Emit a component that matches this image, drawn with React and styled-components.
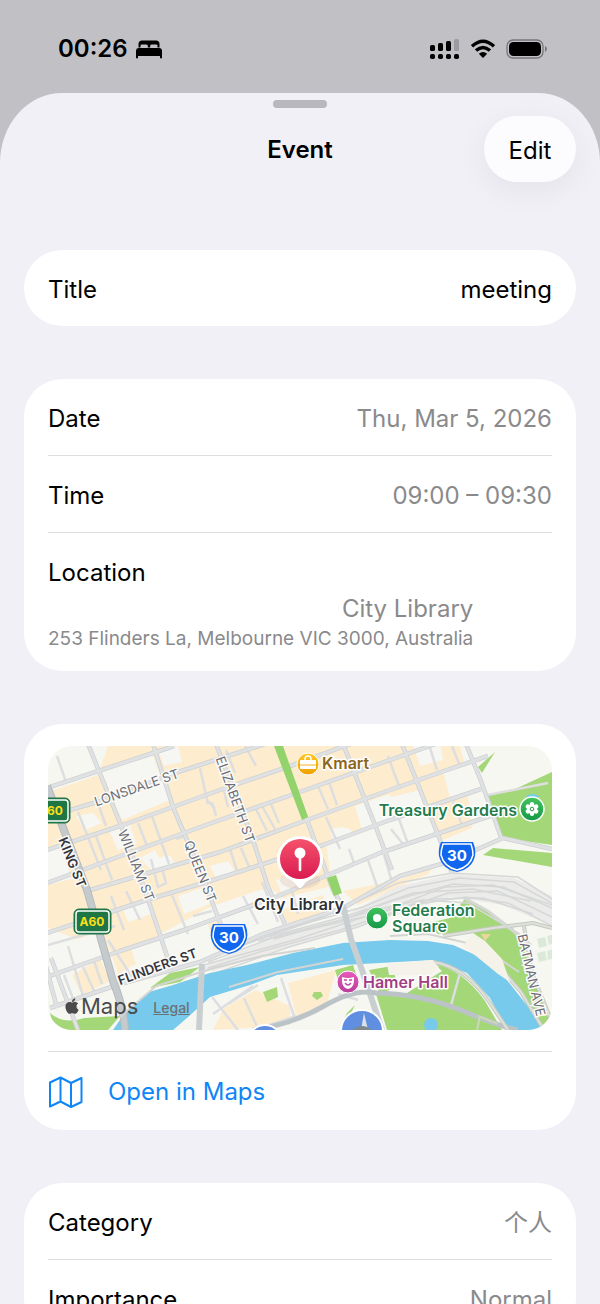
import React from 'react'
import styled, { createGlobalStyle } from 'styled-components'
import { FaApple } from 'react-icons/fa'

const GlobalStyle = createGlobalStyle`
    * {
        box-sizing: border-box;
    }

    body {
        margin: 0;
        background-color: #c1c0c5;
        font-family: Inter, "Noto Sans CJK SC", sans-serif;
        color: #000;
    }
`

const Screen = styled.div`
    display: flex;
    flex-direction: column;
    height: 100vh;
    overflow: hidden;
`

const StatusBar = styled.header`
    display: flex;
    flex: none;
    align-items: center;
    justify-content: space-between;
    height: 93px;
    padding: 5px 52px 0 58px;
`

const StatusGroup = styled.div`
    display: flex;
    align-items: center;
    gap: ${props => props.$gap}px;
`

const Clock = styled.time`
    font-size: 24px;
    font-weight: 600;
    line-height: 32px;
`

const Sheet = styled.main`
    flex: 1;
    min-height: 0;
    padding: 7px 24px 0;
    overflow: hidden;
    background-color: #f1f0f6;
    border-radius: 62px 62px 0 0 / 70px 70px 0 0;
`

const Grabber = styled.div`
    width: 54px;
    height: 8px;
    margin: 0 auto;
    border-radius: 4px;
    background-color: #b8b7bd;
`

const SheetHeader = styled.div`
    display: grid;
    grid-template-columns: 1fr auto 1fr;
    align-items: center;
    margin: 8px 0 68px;
`

const SheetTitle = styled.h1`
    grid-column: 2;
    margin: 0;
    padding-top: 2px;
    font-size: 24px;
    font-weight: 600;
    line-height: 32px;
`

const EditButton = styled.button`
    justify-self: end;
    width: 92px;
    height: 66px;
    padding: 2px 0 0;
    border: 0;
    border-radius: 33px;
    background-color: #fcfcff;
    box-shadow: 0 8px 32px rgba(0, 0, 0, 0.06);
    font: inherit;
    font-size: 24px;
    color: #000;
`

const Sections = styled.div`
    display: flex;
    flex-direction: column;
    gap: 53px;
`

const Card = styled.section`
    padding: 0 24px;
    border-radius: 38px;
    background-color: #fff;
`

const Row = styled.div`
    display: flex;
    align-items: center;
    justify-content: space-between;
    height: ${props => props.$last ? 76 : 77}px;
    padding-top: 3px;
    border-bottom: ${props => props.$last ? 0 : 1}px solid #dededf;
`

const Label = styled.span`
    font-size: 24px;
    line-height: 32px;
`

const Value = styled.span`
    font-size: 24px;
    line-height: 32px;
    color: ${props => props.$dark ? '#000' : '#8a8a8c'};
`

const LocationRow = styled.div`
    display: flex;
    flex-direction: column;
    align-items: flex-start;
    padding: 24px 0 19px;
`

const Place = styled.div`
    display: flex;
    flex-direction: column;
    align-items: flex-end;
    padding-top: 4px;
`

const Address = styled.span`
    font-size: 19px;
    line-height: 27px;
    color: #8a8a8c;
`

const MapCard = styled(Card)`
    padding-top: 22px;
`

const MapFrame = styled.div`
    position: relative;
    height: 284px;
    margin-bottom: 21px;
    overflow: hidden;
    border-radius: 24px;

    > svg {
        display: block;
        width: 100%;
        height: 100%;
    }
`

const MapCredits = styled.div`
    position: absolute;
    left: 15px;
    bottom: 10px;
    display: flex;
    align-items: center;
    color: #4b4b4b;
`

const MapBrand = styled.span`
    display: flex;
    align-items: center;
    font-size: 22px;
    line-height: 28px;
`

const LegalLink = styled.a`
    margin-left: 15px;
    padding-top: 3px;
    font-size: 14px;
    font-weight: 500;
    line-height: 20px;
    color: #6b7175;
`

const OpenLink = styled.a`
    display: flex;
    align-items: center;
    gap: 24px;
    height: 79px;
    padding-top: 2px;
    border-top: 1px solid #dededf;
    font-size: 24px;
    line-height: 32px;
    color: #0f86f7;
    text-decoration: none;
`

const StreetText = styled.text`
    font-size: 13px;
    font-weight: ${props => props.$bold ? 600 : 400};
    fill: ${props => props.$bold ? '#33353f' : '#6c6f79'};
    stroke: #fbfaf6;
    stroke-width: 3px;
    paint-order: stroke;
    text-anchor: middle;
`

const PlaceText = styled.text`
    font-size: 16px;
    font-weight: 600;
    fill: ${props => props.$color};
    stroke: #fff;
    stroke-width: 3px;
    stroke-linejoin: round;
    paint-order: stroke;
    text-anchor: ${props => props.$anchor || 'start'};
`

const SignText = styled.text`
    font-size: ${props => props.$size}px;
    font-weight: 700;
    fill: ${props => props.$color};
    text-anchor: middle;
`

const BedIcon = () => (
    <svg width="26" height="19" viewBox="0 0 26 19" aria-hidden="true">
        <path d="M2.500 7.500V4Q2.500.500 6 .500h14q3.500 0 3.500 3.500v3.500h-2V5.600q0-1.200-1.500-1.200h-4Q14.200 4.400 14.200 5.600v1.900h-2.400V5.600q0-1.200-1.800-1.200H6Q4.500 4.400 4.500 5.600v1.900z" />
        <path d="M3 8h20q3 0 3 3v6.500q0 1-1 1t-1-1V16H2v1.500q0 1-1 1t-1-1V11q0-3 3-3z" />
    </svg>
)

const SignalIcon = () => (
    <svg width="30" height="21" viewBox="0 0 30 21" aria-hidden="true">
        <rect x="0" y="6" width="5" height="6" rx="1.600" />
        <rect x="8" y="4" width="5" height="8" rx="1.600" />
        <rect x="16" y="2" width="5" height="10" rx="1.600" />
        <rect x="24" y="0" width="5" height="12" rx="1.600" fill="#9c9ba0" />
        {[0, 8, 16, 24].map(x => <rect key={x} x={x} y="15" width="5" height="5" rx="1.800" />)}
    </svg>
)

const WifiIcon = () => (
    <svg width="26" height="20" viewBox="0 0 26 20" aria-hidden="true">
        <g fill="none" stroke="#000" strokeWidth="3.400">
            <path d="M2 7.300Q13-2.900 24 7.300" />
            <path d="M6 11.500q7-6.200 14 0" />
        </g>
        <path d="M8.800 14.800q4.200-3.600 8.400 0L13 19z" />
    </svg>
)

const BatteryIcon = () => (
    <svg width="42" height="20" viewBox="0 0 42 20" aria-hidden="true">
        <rect x="1" y="1" width="36" height="18" rx="6" fill="none" stroke="#77767b" strokeWidth="1.300" />
        <rect x="3" y="3" width="32" height="14" rx="4.500" />
        <path d="M39 7q2 1 2 3t-2 3z" fill="#77767b" />
    </svg>
)

const MapIcon = () => (
    <svg width="36" height="32" viewBox="0 0 36 32" fill="none" stroke="#0f86f7" strokeWidth="2" strokeLinejoin="round" aria-hidden="true">
        <path d="M2 6.500 12.500 1.500 23 7 33.500 2v24L23 31 12.500 25.500 2 30.500zM12.500 1.500v24M23 7v24" />
    </svg>
)

const blocks = [
    'M0 46 50 29 60 0H412L424 45 342 72 278 96 284 140 235 152 222 142 160 162 100 195 60 205 0 182z',
    'M374 64 420 50 424 82 395 94z', 'M24 229 52 213 62 235 34 249z', 'M60 198 80 192 88 218 70 228z',
    'M160 178 200 166 200 190 166 204z', 'M232 164 275 149 282 168 240 177z', 'M240 237 288 224 278 262 248 270z',
    'M176 262 208 244 242 260 242 279 165 284z', 'M295 145 350 134 385 122 380 128 310 159z'
]

const openLots = [
    'M53 24 104 8 122 54 74 74z', 'M112 112q12-7 14 6l-24 8zM92 112l15-8 8 16-12 4z', 'M0 105l14-4 9 32-23 6z',
    'M162 120l18-5 8 12-18 9z', 'M282 84q22-8 24 8l-20 8z', 'M28 70l17-3 9 10-17 7z', 'M2 204 54 184 61 204 2 225z',
    'M124 200 144 187 153 200 128 208z', 'M165 160 214 143 230 172 180 190z', 'M307 60 342 48 350 72 314 84z',
    'M60 82 82 78 88 98 70 104z', 'M110 4 130 0 134 16 116 20z', 'M365 0 392-4 395 14 372 20z', 'M340 52 372 44 378 62 345 72z',
    'M74 160 98 152 104 168 80 176z', 'M130 150 160 140 162 158 136 168z', 'M228 134l16-6 6 14-16 6z', 'M395 24 416 16 424 45 402 52z'
]

const parks = [
    'M440 49 465 44 504 26V99L455 92z', 'M430 21 447 6 434 27z', 'M435 109 445 102 504 107V121z',
    'M376 178 402 172 416 154 433 160 465 182 477 205 483 224 504 276V284H492L470 243 453 222 433 198 425 187 390 188z',
    'M385 217Q415 224 437 255L454 284H339L328 248 359 247 394 225z',
    'M102 242 122 227 152 221 132 236z', 'M2 267Q16 279 36 272L72 270 60 284H6z',
    'M215 246 229 241 230 251 219 256z', 'M266 246h7l2 4-6 4-5-4z', 'M287 224l18-5 4 12-18 6z', 'M321 224l23-4 6 20-18 8z',
    'M299 267l8-8-4 8-8 8z'
]

const mallTrees = ['M226 0h9L260 71l-6 3z', 'M279 132l9-3 6 18-8 3z']

const streets = [
    'M40-2 72 77 97 144 122 219 130 223', 'M105-2 125 61 155 132 174 182', 'M168-2 205 94 220 141 237 178', 'M229-2 259 74 285 144 298 166',
    'M295-2 329 84 344 124', 'M354-2 392 94 404 127', 'M418-2 433 35 454 94', 'M-1 42 105 7 126 0', 'M-1 71 49 56 130 26 220-3',
    'M-1 104 75 79 172 44 245 19 305-3', 'M-1 137 89 104 172 74 249 47 342 14 390-3', 'M42 144 172 106 259 74 342 44 399 24 440 10',
    'M-1 187 102 153 162 135 275 99 342 74 433 43', 'M-1 231 72 205 142 182 230 150 332 107 448 68',
    'M2 262 69 239 152 216 215 188 295 162 352 130 400 116 455 92 504 103', 'M3 212 30 284', 'M9 262-2 220'
]

const lanes = [
    'M9 10 18 36', 'M30 66 53 124', 'M51 60 58 80', 'M48 90 64 134', 'M90 77 99 100', 'M104 70 121 118', 'M128 93 138 90',
    'M103 113 110 141 118 137 114 122', 'M152 22 160 58', 'M160 55 167 63', 'M178 4 187 27', 'M197 0 208 20', 'M164 56 168 70',
    'M176 45 180 61', 'M208 63 219 85', 'M214 60 227 83', 'M223 58 231 77', 'M182 103 190 128', 'M193 102 202 123', 'M270 40 280 63',
    'M281 36 289 59', 'M301 103 306 117', 'M320 114 331 146', 'M343 83 355 98', 'M340 10 352 43', 'M382 2 389 24', 'M404 0 412 20',
    'M405 56 414 79', 'M336 109 344 136', 'M351 73 360 98', 'M278 71 292 103', 'M63 150 76 184', 'M78 145 92 174', 'M124 149 140 188',
    'M145 170 164 165', 'M20 200 35 250', 'M0 199 67 180', 'M16 229 29 263', 'M35 221 47 247', 'M46 215 54 238', 'M60 194 84 231',
    'M195 150 210 178', 'M214 136 230 176', 'M244 145 250 168', 'M196 252 210 283', 'M164 251 190 284', 'M180 258 210 239',
    'M233 232 246 270', 'M210 283 248 270', 'M165 268 205 240', 'M310 254 290 248', 'M412 227 402 263', 'M440 49 500 37'
]

const rails = [
    'M160 222 215 205 292 184 340 168 400 147 450 145 504 171', 'M160 216 232 189 298 173 343 155 405 138 455 141 504 162',
    'M152 220 250 193 340 163 397 141 445 139 504 159', 'M165 210 235 184 315 161 360 142 411 132 466 136 504 157',
    'M165 228 241 201 310 181 370 158 418 151 460 157 504 180', 'M210 195 315 171 385 153 435 152 485 168',
    'M220 191 302 169 365 147 425 143 483 155', 'M172 207 268 174 350 137 404 127 470 131 504 153',
    'M226 193 335 162 374 154 420 157 448 174 472 188'
]

const CityMap = () => (
    <svg viewBox="0 0 504 284" preserveAspectRatio="xMidYMid slice" role="img" aria-label="Map of City Library">
        <defs>
            <linearGradient id="pinFill" x1="0" y1="0" x2="0" y2="1">
                <stop offset="0" stopColor="#f5516b" />
                <stop offset="1" stopColor="#d91b51" />
            </linearGradient>
            <linearGradient id="shopFill" x1="0" y1="0" x2="0" y2="1">
                <stop offset="0" stopColor="#ffc928" />
                <stop offset="1" stopColor="#eda000" />
            </linearGradient>
            <linearGradient id="parkFill" x1="0" y1="0" x2="0" y2="1">
                <stop offset="0" stopColor="#42c35d" />
                <stop offset="1" stopColor="#159847" />
            </linearGradient>
            <linearGradient id="hallFill" x1="0" y1="0" x2="0" y2="1">
                <stop offset="0" stopColor="#e95abd" />
                <stop offset="1" stopColor="#b83d99" />
            </linearGradient>
        </defs>
        <rect width="504" height="284" fill="#f7f7f2" />
        <path d={blocks.join('')} fill="#fdecce" />
        <path d={openLots.join('')} fill="#f6f7f2" />
        <path d={parks.join('')} fill="#a4d778" />
        <path d="M153 222 225 191 295 171 348 141 405 128 466 132 504 150V180L455 159 402 151 341 171 260 195 166 225z" fill="#ebebe9" />
        <g fill="none" stroke="#d6d8d8" strokeWidth="1.500">
            {rails.map(d => <path key={d} d={d} />)}
        </g>
        <path d="M65 284 76 268 101 246 125 239 162 227 199 219 245 207 295 197 342 194 380 195 405 199 432 211 455 229 492 276 498 284H459L442 252 419 227 385 214 332 217 295 219 229 229 202 239 162 251 139 272 125 284z" fill="#77caeb" />
        <g fill="none" stroke="#dddee0" strokeWidth="2.500">
            {lanes.map(d => <path key={d} d={d} />)}
        </g>
        <g fill="none" strokeLinejoin="round">
            <g stroke="#cdd0d2" strokeWidth="4.500">
                {streets.map(d => <path key={d} d={d} />)}
            </g>
            <g stroke="#dfe1e2" strokeWidth="3">
                {streets.map(d => <path key={d} d={d} />)}
            </g>
            <path d={mallTrees.join('')} fill="#93d36c" />
            <path d="M-1 40 39 144 65 235Q76 262 77 284" stroke="#b5bbc0" strokeWidth="8" />
            <path d="M-1 40 39 144 65 235Q76 262 77 284" stroke="#c5cacd" strokeWidth="6" />
            <path d="M295 160 303 193 315 227 334 284M154 218 151 284" stroke="#c9ced0" strokeWidth="6" />
            <path d="M205 284Q245 278 276 260T328 247Q374 248 415 265T470 284" stroke="#bcc3c7" strokeWidth="5" />
            <path d="M72 271 108 240 166 222 214 210 267 202 M181 241 230 226 295 213 M342 190 380 188 432 200 471 226" stroke="#d4d5d3" strokeWidth="2" />
            <path d="M385 216Q418 221 442 257L460 284M448 217 473 246 496 284M395 190 445 182 485 177 504 182M476 180 484 227 504 276" stroke="#c4cabf" strokeWidth="4" />
            <path d="M385 216Q418 221 442 257L460 284M448 217 473 246 496 284M395 190 445 182 485 177 504 182M476 180 484 227 504 276" stroke="#dee0da" strokeWidth="2" />
            <path d="M430 270 450 278M432 270 429 284" stroke="#cbd7b9" strokeWidth="2" />
            <path d="M345 166 375 156 M416 152 440 165 484 200" stroke="#d6d7d5" strokeWidth="3" />
        </g>
        <path d="M339 218 384 214 391 221 383 229 341 229zM425 187 437 195 454 213 462 236 450 228 428 210 415 200z" fill="#f5f3e9" />
        <path d="M433 188h10l-6 7z" fill="#e8d79b" />
        <circle cx="383" cy="279" r="7" fill="#77caeb" />
        <g fill="#dbead8">
            <path d="M489 193l8-2 2 9-8 2zM499 190l8-2v9l-6 2zM489 207l8-2 2 9-8 2zM499 205l7-2v9l-6 2z" />
        </g>
        <g stroke="#fff" strokeWidth="2">
            <circle cx="314" cy="285" r="21" fill="#608ee0" />
            <circle cx="217" cy="296" r="17" fill="#608ee0" />
        </g>
        <path d="M316 267l4 17h-7z" fill="#dce2e9" />
        <path d="M304 284q10-8 20 0z" fill="#7c8a90" />

        <StreetText transform="translate(90 46) rotate(-19)">LONSDALE ST</StreetText>
        <StreetText transform="translate(183 55) rotate(70)">ELIZABETH ST</StreetText>
        <StreetText transform="translate(84 121) rotate(68)">WILLIAM ST</StreetText>
        <StreetText transform="translate(148 127) rotate(68)">QUEEN ST</StreetText>
        <StreetText $bold transform="translate(20 118) rotate(68)">KING ST</StreetText>
        <StreetText $bold transform="translate(111 225) rotate(-20)">FLINDERS ST</StreetText>
        <StreetText transform="translate(479 230) rotate(77)">BATMAN AVE</StreetText>

        <g fill="#1e7644" stroke="#1e7644">
            <rect x="-16" y="52" width="38" height="25" rx="5" />
            <rect x="-14" y="54" width="34" height="21" rx="3" stroke="#fff" strokeWidth="1.500" />
            <rect x="26" y="163" width="37" height="25" rx="5" />
            <rect x="28" y="165" width="33" height="21" rx="3" stroke="#fff" strokeWidth="1.500" />
        </g>
        <SignText $size="12" $color="#ffdf1c" x="7" y="69">60</SignText>
        <SignText $size="12" $color="#ffdf1c" x="44" y="180">A60</SignText>

        {[[409, 110], [181, 192]].map(([x, y]) => (
            <g key={x} transform={`translate(${x} ${y})`}>
                <path d="M-16-14H16Q19-7 18 0 15 13 0 16-15 13-18 0-19-7-16-14z" fill="#1067ee" />
                <path d="M-14-12H14Q16-6 16-1 13 11 0 14-13 11-16-1-16-6-14-12z" fill="#1067ee" stroke="#fff" strokeWidth="1.500" />
                <SignText $size="15" $color="#fff" x="0" y="5">30</SignText>
            </g>
        ))}

        <circle cx="260" cy="18" r="11" fill="url(#shopFill)" stroke="#fff" strokeWidth="1" />
        <rect x="252" y="14" width="16" height="9" rx="1" fill="#fff" />
        <path d="M257 14v-1q0-3 3-3t3 3v1" fill="none" stroke="#fff" strokeWidth="1.500" />
        <path d="M252 19h16" stroke="#efb21f" />
        <PlaceText $color="#8c6518" x="274" y="23">Kmart</PlaceText>

        <PlaceText $color="#237c4c" $anchor="end" x="469" y="70">Treasury Gardens</PlaceText>
        <path d="M477 51q8-6 15 0z" fill="#71cdef" />
        <circle cx="484" cy="63" r="12" fill="url(#parkFill)" stroke="#fff" strokeWidth="1.500" />
        <g fill="#fff">
            {[0, 60, 120, 180, 240, 300].map(a => <ellipse key={a} cx="484" cy="59" rx="2.300" ry="3" transform={`rotate(${a} 484 63)`} />)}
            <circle cx="484" cy="63" r="4" />
        </g>
        <circle cx="484" cy="63" r="1.800" fill="none" stroke="#249e4b" />

        <circle cx="329" cy="172" r="11" fill="url(#parkFill)" stroke="#fff" strokeWidth="1" />
        <circle cx="329" cy="172" r="4" fill="#fff" />
        <PlaceText $color="#237c4c" x="344" y="170">Federation</PlaceText>
        <PlaceText $color="#237c4c" x="344" y="186">Square</PlaceText>

        <circle cx="300" cy="236" r="11" fill="url(#hallFill)" stroke="#fff" strokeWidth="1" />
        <path d="M294 231q6 2 12 0v5q-1 6-6 7-5-1-6-7z" fill="#fff" />
        <path d="M296 234h3M301 234h3M297 237q3 4 6 0" fill="none" stroke="#c846a4" strokeWidth="1.300" />
        <PlaceText $color="#a13e83" x="315" y="242">Hamer Hall</PlaceText>

        <ellipse cx="252" cy="134" rx="20" ry="9" fill="#d9b9a4" opacity="0.300" />
        <path d="M232 124 247 137Q250 142 252 142T257 137L272 124z" fill="#fff" />
        <circle cx="252" cy="113" r="23" fill="#fff" />
        <circle cx="252" cy="113" r="20" fill="url(#pinFill)" />
        <circle cx="252" cy="107" r="5.500" fill="#fff" />
        <path d="M252 111v13" stroke="#fff" strokeWidth="2.600" strokeLinecap="round" />
        <PlaceText $color="#303136" $anchor="middle" x="251" y="164">City Library</PlaceText>
    </svg>
)

const DetailRow = ({ label, value, last, dark }) => (
    <Row $last={last}>
        <Label>{label}</Label>
        <Value $dark={dark}>{value}</Value>
    </Row>
)

function App() {
    return (
        <Screen>
            <GlobalStyle />
            <StatusBar>
                <StatusGroup $gap={8}>
                    <Clock>00:26</Clock>
                    <BedIcon />
                </StatusGroup>
                <StatusGroup $gap={10}>
                    <SignalIcon />
                    <WifiIcon />
                    <BatteryIcon />
                </StatusGroup>
            </StatusBar>
            <Sheet>
                <Grabber />
                <SheetHeader>
                    <SheetTitle>Event</SheetTitle>
                    <EditButton type="button">Edit</EditButton>
                </SheetHeader>
                <Sections>
                    <Card>
                        <DetailRow label="Title" value="meeting" last dark />
                    </Card>
                    <Card>
                        <DetailRow label="Date" value="Thu, Mar 5, 2026" />
                        <DetailRow label="Time" value="09:00 – 09:30" />
                        <LocationRow>
                            <Label>Location</Label>
                            <Place>
                                <Value>City Library</Value>
                                <Address>253 Flinders La, Melbourne VIC 3000, Australia</Address>
                            </Place>
                        </LocationRow>
                    </Card>
                    <MapCard>
                        <MapFrame>
                            <CityMap />
                            <MapCredits>
                                <MapBrand><FaApple size={18} />Maps</MapBrand>
                                <LegalLink href="#legal">Legal</LegalLink>
                            </MapCredits>
                        </MapFrame>
                        <OpenLink href="#maps">
                            <MapIcon />
                            Open in Maps
                        </OpenLink>
                    </MapCard>
                    <Card>
                        <DetailRow label="Category" value="个人" />
                        <DetailRow label="Importance" value="Normal" last />
                    </Card>
                </Sections>
            </Sheet>
        </Screen>
    )
}

export default App
